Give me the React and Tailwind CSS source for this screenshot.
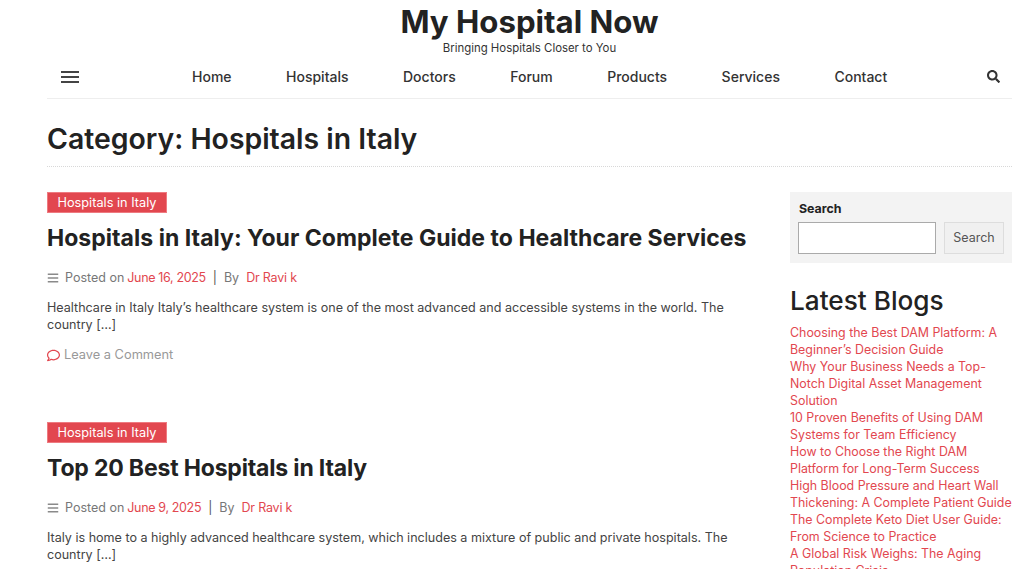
import React from 'react';
import { FaSearch, FaRegComment, FaBars } from 'react-icons/fa';

const navItems = ['Home', 'Hospitals', 'Doctors', 'Forum', 'Products', 'Services', 'Contact'];

const posts = [
  {
    title: 'Hospitals in Italy: Your Complete Guide to Healthcare Services',
    titleClass: 'tracking-[0.03px]',
    date: 'June 16, 2025',
    lines: [
      'Healthcare in Italy Italy’s healthcare system is one of the most advanced and accessible systems in the world. The',
      'country […]',
    ],
    comment: true,
  },
  {
    title: 'Top 20 Best Hospitals in Italy',
    titleClass: 'tracking-[-0.17px]',
    date: 'June 9, 2025',
    lines: [
      'Italy is home to a highly advanced healthcare system, which includes a mixture of public and private hospitals. The',
      'country […]',
    ],
  },
];

const blogs = [
  ['Choosing the Best DAM Platform: A', 'Beginner’s Decision Guide'],
  ['Why Your Business Needs a Top-', 'Notch Digital Asset Management', 'Solution'],
  ['10 Proven Benefits of Using DAM', 'Systems for Team Efficiency'],
  ['How to Choose the Right DAM', 'Platform for Long-Term Success'],
  ['High Blood Pressure and Heart Wall', 'Thickening: A Complete Patient Guide'],
  ['The Complete Keto Diet User Guide:', 'From Science to Practice'],
  ['A Global Risk Weighs: The Aging', 'Population Crisis'],
];

const Post = ({ post }) => (
  <article className="h-[230px]">
    <a className="block w-[120px] h-[21px] bg-[#e2474f] border border-[#ee7a80] text-white text-[12.75px] leading-[19px] text-center">
      Hospitals in Italy
    </a>
    <h2 className={`mt-[10px] text-[23px] leading-[30px] font-bold text-[#222] whitespace-nowrap ${post.titleClass}`}>
      {post.title}
    </h2>
    <div className="mt-[16px] flex items-center h-[18px] text-[12.5px] text-[#777] whitespace-nowrap">
      <FaBars className="w-[12px] h-[12px] text-[#8a8a8a] mr-[6px]" />
      <span>Posted on</span>
      <a className="ml-[3px] tracking-[-0.35px] text-[#e2474f]">{post.date}</a>
      <span className="ml-[7px] mr-[7px] text-[#555]">|</span>
      <span>By</span>
      <a className="ml-[7px] tracking-[-0.2px] text-[#e2474f]">Dr Ravi k</a>
    </div>
    <div className="mt-[12px] text-[12.55px] leading-[17px] text-[#444]">
      {post.lines.map((line) => (
        <p key={line} className="whitespace-nowrap">{line}</p>
      ))}
    </div>
    {post.comment && (
      <div className="mt-[13px] flex items-center h-[18px] text-[12.8px] text-[#999]">
        <FaRegComment className="w-[13px] h-[13px] text-[#e2474f] mr-[4px]" />
        <span>Leave a Comment</span>
      </div>
    )}
  </article>
);

const App = () => {
  return (
    <div className="h-[569px] overflow-hidden bg-white font-[Inter,sans-serif]">
      <div className="ml-[47px] w-[965px]">
        <header className="h-[99px] border-b border-[#eeeeee]">
          <div className="pt-[4px] text-center">
            <h1 className="text-[31.2px] leading-[36px] font-bold text-[#222]">My Hospital Now</h1>
            <p className="mt-[1px] text-[11.4px] leading-[14px] text-[#333]">Bringing Hospitals Closer to You</p>
          </div>
          <nav className="mt-[9px] flex items-center h-[24px]">
            <div className="ml-[14px] mt-[2px] w-[18px] flex flex-col gap-[3px]">
              <span className="h-[2px] bg-[#444]" />
              <span className="h-[2px] bg-[#444]" />
              <span className="h-[2px] bg-[#444]" />
            </div>
            <ul className="ml-[113px] flex gap-[54.5px] text-[14px] font-medium text-[#333]">
              {navItems.map((item) => (
                <li key={item}>{item}</li>
              ))}
            </ul>
            <FaSearch className="ml-auto mr-[12px] w-[13px] h-[13px] text-[#333]" />
          </nav>
        </header>

        <div className="h-[68px] border-b border-dotted border-[#d8d8d8] flex items-end pb-[9px]">
          <h1 className="text-[28.4px] leading-[36px] font-semibold text-[#222]">Category: Hospitals in Italy</h1>
        </div>

        <div className="mt-[25px] flex justify-between">
          <main className="w-[713px]">
            {posts.map((post) => (
              <Post key={post.title} post={post} />
            ))}
          </main>

          <aside className="w-[222px]">
            <div className="h-[71px] bg-[#f3f3f3] pt-[9px] px-[8px]">
              <label className="block ml-[1px] text-[12.4px] leading-[16px] font-bold text-[#222]">Search</label>
              <div className="mt-[5px] flex gap-[8px]">
                <input className="w-[138px] h-[32px] bg-white border border-[#aaaaaa]" />
                <button className="w-[60px] h-[32px] bg-[#f0f0f0] border border-[#dddddd] text-[12.5px] text-[#555]">
                  Search
                </button>
              </div>
            </div>
            <h2 className="mt-[20px] text-[26.2px] leading-[36px] font-medium text-[#222]">Latest Blogs</h2>
            <div className="mt-[5px] text-[12.4px] leading-[17px] text-[#e2474f]">
              {blogs.map((lines) => (
                <a key={lines[0]} className="block">
                  {lines.map((line) => (
                    <span key={line} className="block whitespace-nowrap">{line}</span>
                  ))}
                </a>
              ))}
            </div>
          </aside>
        </div>
      </div>
    </div>
  );
};

export default App;
